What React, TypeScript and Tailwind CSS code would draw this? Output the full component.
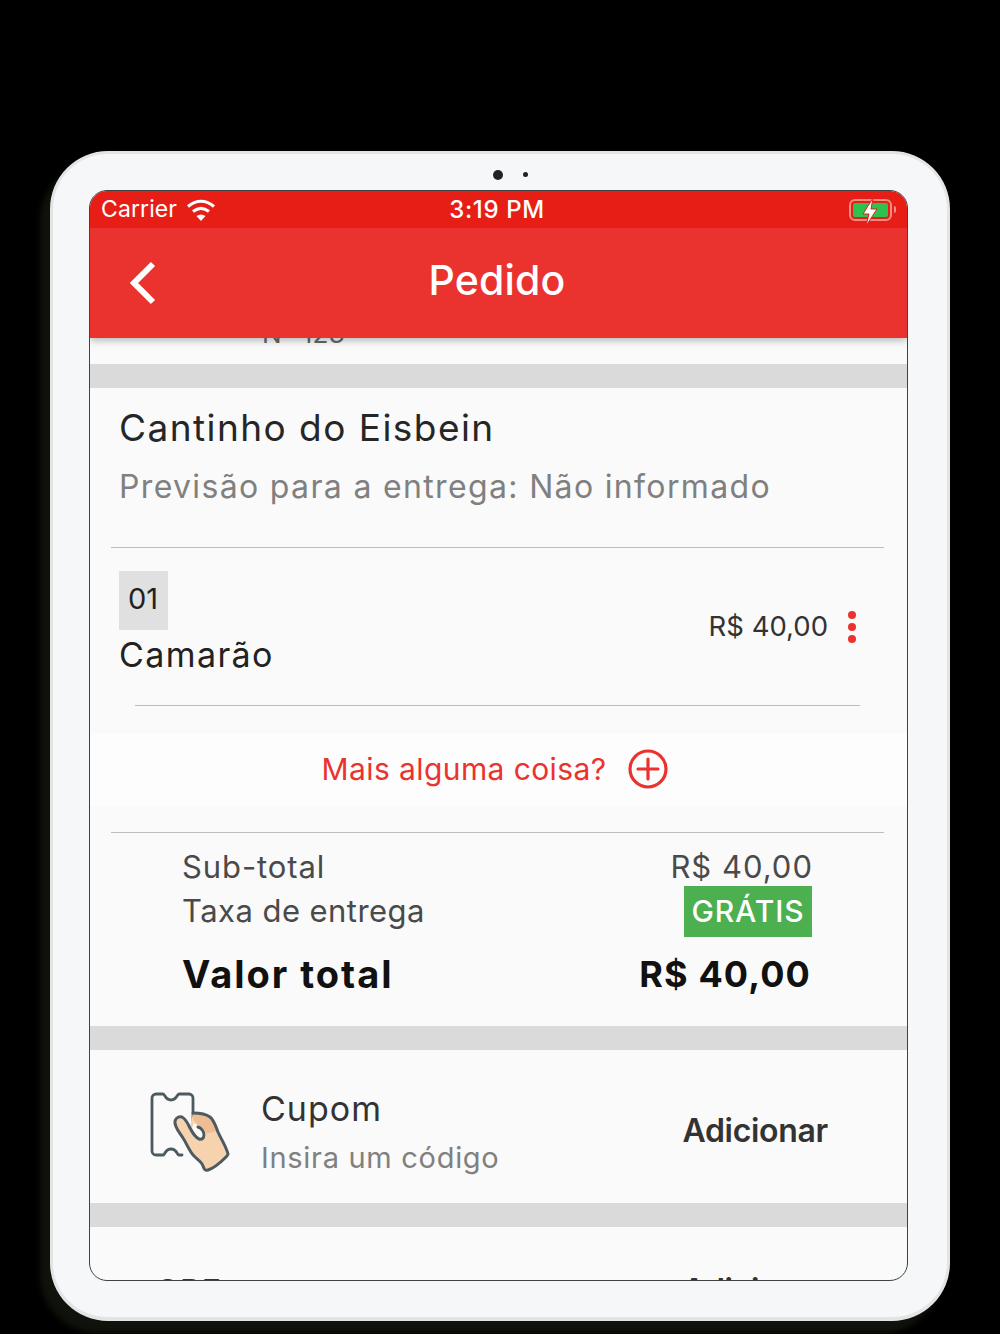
function Gap() {
  return <div className="h-[24px] shrink-0 bg-[#dadada]" />;
}

function Line({ className }: { className: string }) {
  return <div className={`h-px shrink-0 bg-[#bdbdbd] ${className}`} />;
}

function CouponIcon() {
  return (
    <svg viewBox="0 0 120 120" className="h-[120px] w-[120px] shrink-0" fill="none">
      <path
        d="M26 23h7c2 0 2 6 8 6s6-6 8-6h10a4 4 0 0 1 4 4v26M52 84h-3c-2 0-2-6-8-6s-6 6-8 6h-7a4 4 0 0 1-4-4V27a4 4 0 0 1 4-4"
        stroke="#4d5a60"
        strokeWidth="2.8"
        strokeLinejoin="round"
        strokeLinecap="round"
      />
      <path
        d="M63 42c6 0 13 1 17 4 4 3 6 10 8 15 3 7 8 14 10 22 0 1-1 2-3 4-5 5-11 10-17 12-3 1-4-1-5-4-1-4-6-7-9-10-5-5-7-12-11-18-3-5-9-11-8-17 1-3 4-5 7-4 4 2 6 6 8 10Z"
        fill="#f7d2ae"
      />
      <path d="M63 42c6 0 13 1 17 4 4 3 5 9 7 14l-13 3-3-5-8-10Z" fill="#efbd93" />
      <path d="M62 57c3 5 5 9 9 11 3 1 5-1 5-4 0-4-3-7-6-8l-6-4Z" fill="#fafafa" />
      <path
        d="M63 42c6 0 13 1 17 4 4 3 6 10 8 15 3 7 8 14 10 22 0 1-1 2-3 4-5 5-11 10-17 12-3 1-4-1-5-4-1-4-6-7-9-10-5-5-7-12-11-18-3-5-9-11-8-17 1-3 4-5 7-4 4 2 6 7 8 11 2 4 5 9 9 11 3 1 5-1 5-4 0-4-3-7-6-8"
        stroke="#4d5a60"
        strokeWidth="3"
        strokeLinejoin="round"
        strokeLinecap="round"
      />
    </svg>
  );
}

export default function App() {
  return (
    <div className="h-[1334px] overflow-hidden bg-black px-[50px] pt-[151px] font-['Inter',sans-serif]">
      <div className="h-[1170px] rounded-[58px] border-x-[3px] border-t-[3px] border-b-[4px] border-[#e2e4e6] bg-[#f6f7f9] pt-[36px] pr-[39px] pl-[36px] shadow-[-10px_12px_6px_#10130b]">
        <div className="-mt-[25px] mb-[6px] flex h-[19px] items-center justify-center gap-[20px] pl-[24px]">
          <div className="h-[10px] w-[10px] rounded-full bg-[#222]" />
          <div className="h-[5px] w-[5px] rounded-full bg-[#222]" />
        </div>
        <div className="flex h-[1091px] flex-col overflow-hidden rounded-[18px] border-[1.5px] border-[#3f4345] bg-[#fafafa]">
          <div className="relative z-10 shrink-0 shadow-[0_2px_8px_rgba(0,0,0,0.3)]">
            <div className="flex h-[37px] items-center justify-between bg-[#e71e16] px-[11px] text-white">
              <div className="flex w-[197px] items-center gap-[9px]">
                <span className="text-[23px] leading-none font-normal tracking-[0.1px]">Carrier</span>
                <svg viewBox="0 0 30 24" className="h-[24px] w-[30px]" fill="none" stroke="#fff" strokeWidth="3.2" strokeLinecap="butt">
                  <path d="M2 8.500c8-7 18-7 26 0" />
                  <path d="M7 13.500c5-4 11-4 16 0" />
                  <path d="M15 23l-4.500-5c3-2 6-2 9 0Z" fill="#fff" stroke="none" />
                </svg>
              </div>
              <span className="text-[24px] leading-none font-medium tracking-[0.6px]">3:19 PM</span>
              <div className="flex w-[200px] items-center justify-end gap-[2px]">
                <div className="relative flex h-[22px] w-[43px] items-center rounded-[6px] border-2 border-[#f28a85] p-[2px]">
                  <div className="h-full w-full rounded-[2px] bg-[#2fc04f]" />
                  <svg viewBox="0 0 20 30" className="absolute top-[-4px] left-[9px] h-[30px] w-[20px]">
                    <path d="M13 1 3 17h6l-3 12 11-17h-6Z" fill="#fff" stroke="#e71e16" strokeWidth="1" />
                  </svg>
                </div>
                <div className="h-[7px] w-[2px] rounded-r-full bg-[#f28a85]" />
              </div>
            </div>
            <div className="relative flex h-[110px] items-center justify-center bg-[#ea332e] pr-[3px] pb-[6px]">
              <svg viewBox="0 0 30 44" className="absolute top-[33px] left-[38px] h-[44px] w-[30px]" fill="none" stroke="#fff" strokeWidth="6">
                <path d="M25 3 6 22l19 19" />
              </svg>
              <h1 className="text-[41px] leading-none font-medium tracking-[0.2px] text-white">Pedido</h1>
            </div>
          </div>

          <div className="h-[26px] shrink-0 pl-[172px] text-[26px] leading-[14px] tracking-[0.3px] text-[#666]">
            <span className="-mt-[11px] block">N° 123</span>
          </div>
          <Gap />

          <div className="h-[159px] shrink-0 pt-[17px] pl-[29px]">
            <h2 className="text-[37px] leading-[45px] tracking-[1.45px] text-[#262626]">Cantinho do Eisbein</h2>
            <p className="mt-[17px] text-[32px] leading-[40px] tracking-[1.34px] text-[#808080]">
              Previsão para a entrega: Não informado
            </p>
          </div>
          <Line className="mr-[23px] ml-[21px]" />

          <div className="flex h-[157px] shrink-0 items-center justify-between pr-[51px] pb-[9px] pl-[29px]">
            <div>
              <div className="flex h-[59px] w-[49px] items-center justify-center bg-[#e0e0e0] pr-[1px] pb-[3px] text-[29px] text-[#222]">01</div>
              <div className="mt-[6px] text-[34px] leading-[38px] tracking-[1.4px] text-[#222]">Camarão</div>
            </div>
            <div className="mt-[9px] flex items-center gap-[20px]">
              <span className="text-[27.500px] leading-none text-[#333]">R$ 40,00</span>
              <div className="flex flex-col gap-[4px]">
                <div className="h-[8px] w-[8px] rounded-full bg-[#ea332e]" />
                <div className="h-[8px] w-[8px] rounded-full bg-[#ea332e]" />
                <div className="h-[8px] w-[8px] rounded-full bg-[#ea332e]" />
              </div>
            </div>
          </div>
          <Line className="mr-[47px] ml-[45px]" />

          <div className="flex h-[126px] shrink-0 items-center">
            <div className="flex h-[73px] w-full items-center justify-center gap-[22px] bg-[#fdfdfd] pr-[7px]">
              <span className="text-[30px] leading-none tracking-[0.4px] text-[#ea332e]">Mais alguma coisa?</span>
              <svg viewBox="0 0 40 40" className="h-[40px] w-[40px]" fill="none" stroke="#ea332e" strokeWidth="3.2">
                <circle cx="20" cy="20" r="18" />
                <path d="M20 10v20M10 20h20" strokeLinecap="round" />
              </svg>
            </div>
          </div>
          <Line className="mr-[23px] ml-[21px]" />

          <div className="h-[193px] shrink-0 pt-[17px] pr-[95px] pl-[92px]">
            <div className="flex h-[35px] items-center justify-between text-[31px] text-[#4a4a4a]">
              <span className="tracking-[0.9px]">Sub-total</span>
              <span className="-mr-[1px] tracking-[1px]">R$ 40,00</span>
            </div>
            <div className="mt-[1px] flex h-[51px] items-center justify-between text-[31px] text-[#4a4a4a]">
              <span className="tracking-[0.45px]">Taxa de entrega</span>
              <span className="flex h-[51px] w-[128px] items-center justify-center bg-[#4caf50] text-[30px] font-medium tracking-[0.9px] text-white">
                GRÁTIS
              </span>
            </div>
            <div className="mt-[10px] flex h-[54px] items-center justify-between pr-[1px] font-bold text-[#111]">
              <span className="text-[38px] tracking-[2px]">Valor total</span>
              <span className="text-[36px] tracking-[1.1px]">R$ 40,00</span>
            </div>
          </div>
          <Gap />

          <div className="flex h-[153px] shrink-0 items-center justify-between pt-[9px] pr-[79px] pl-[40px]">
            <div className="flex items-center gap-[11px]">
              <CouponIcon />
              <div className="pt-[5px]">
                <div className="text-[34px] leading-[40px] tracking-[1px] text-[#333]">Cupom</div>
                <div className="mt-[9px] text-[29px] leading-[40px] tracking-[0.7px] text-[#808080]">Insira um código</div>
              </div>
            </div>
            <span className="text-[32px] leading-none font-semibold tracking-[-0.3px] text-[#333]">Adicionar</span>
          </div>
          <Gap />

          <div className="flex h-[200px] shrink-0 justify-between pt-[40px] pr-[79px] pl-[65px] text-[#333]">
            <span className="text-[33px] tracking-[0.6px]">CPF na nota</span>
            <span className="text-[32px] font-semibold tracking-[-0.3px]">Adicionar</span>
          </div>
        </div>
      </div>
    </div>
  );
}
